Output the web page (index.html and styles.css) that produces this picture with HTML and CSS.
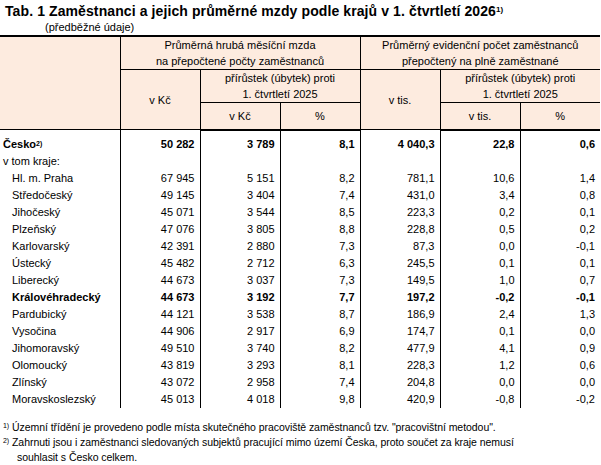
FILE: index.html
```
<!DOCTYPE html>
<html lang="cs">
<head>
    <meta charset="UTF-8">
    <title>Tab. 1 Zaměstnanci a jejich průměrné mzdy podle krajů</title>
    <link rel="stylesheet" href="styles.css">
</head>
<body>
<div class="page">
    <h1>Tab. 1 Zaměstnanci a jejich průměrné mzdy podle krajů v 1. čtvrtletí 2026<sup>1)</sup></h1>
    <p class="sub">(předběžné údaje)</p>

    <table class="tab">
        <colgroup>
            <col class="c-label"><col class="c-num"><col class="c-num"><col class="c-num"><col class="c-num"><col class="c-num"><col class="c-num">
        </colgroup>
        <thead>
        <tr class="h1">
            <th rowspan="3" class="first"></th>
            <th colspan="3">Průměrná hrubá měsíční mzda<br>na přepočtené počty zaměstnanců</th>
            <th colspan="3">Průměrný evidenční počet zaměstnanců<br>přepočtený na plně zaměstnané</th>
        </tr>
        <tr class="h2">
            <th rowspan="2">v Kč</th>
            <th colspan="2">přírůstek (úbytek) proti<br>1. čtvrtletí 2025</th>
            <th rowspan="2">v tis.</th>
            <th colspan="2">přírůstek (úbytek) proti<br>1. čtvrtletí 2025</th>
        </tr>
        <tr class="h3">
            <th>v Kč</th>
            <th>%</th>
            <th>v tis.</th>
            <th>%</th>
        </tr>
        </thead>
        <tbody>
        <tr class="total bold">
            <td>Česko<sup>2)</sup></td><td>50 282</td><td>3 789</td><td>8,1</td><td>4 040,3</td><td>22,8</td><td>0,6</td>
        </tr>
        <tr>
            <td>v tom kraje:</td><td></td><td></td><td></td><td></td><td></td><td></td>
        </tr>
        <tr class="kraj"><td>Hl. m. Praha</td><td>67 945</td><td>5 151</td><td>8,2</td><td>781,1</td><td>10,6</td><td>1,4</td></tr>
        <tr class="kraj"><td>Středočeský</td><td>49 145</td><td>3 404</td><td>7,4</td><td>431,0</td><td>3,4</td><td>0,8</td></tr>
        <tr class="kraj"><td>Jihočeský</td><td>45 071</td><td>3 544</td><td>8,5</td><td>223,3</td><td>0,2</td><td>0,1</td></tr>
        <tr class="kraj"><td>Plzeňský</td><td>47 076</td><td>3 805</td><td>8,8</td><td>228,8</td><td>0,5</td><td>0,2</td></tr>
        <tr class="kraj"><td>Karlovarský</td><td>42 391</td><td>2 880</td><td>7,3</td><td>87,3</td><td>0,0</td><td>-0,1</td></tr>
        <tr class="kraj"><td>Ústecký</td><td>45 482</td><td>2 712</td><td>6,3</td><td>245,5</td><td>0,1</td><td>0,1</td></tr>
        <tr class="kraj"><td>Liberecký</td><td>44 673</td><td>3 037</td><td>7,3</td><td>149,5</td><td>1,0</td><td>0,7</td></tr>
        <tr class="kraj bold"><td>Královéhradecký</td><td>44 673</td><td>3 192</td><td>7,7</td><td>197,2</td><td>-0,2</td><td>-0,1</td></tr>
        <tr class="kraj"><td>Pardubický</td><td>44 121</td><td>3 538</td><td>8,7</td><td>186,9</td><td>2,4</td><td>1,3</td></tr>
        <tr class="kraj"><td>Vysočina</td><td>44 906</td><td>2 917</td><td>6,9</td><td>174,7</td><td>0,1</td><td>0,0</td></tr>
        <tr class="kraj"><td>Jihomoravský</td><td>49 510</td><td>3 740</td><td>8,2</td><td>477,9</td><td>4,1</td><td>0,9</td></tr>
        <tr class="kraj"><td>Olomoucký</td><td>43 819</td><td>3 293</td><td>8,1</td><td>228,3</td><td>1,2</td><td>0,6</td></tr>
        <tr class="kraj"><td>Zlínský</td><td>43 072</td><td>2 958</td><td>7,4</td><td>204,8</td><td>0,0</td><td>0,0</td></tr>
        <tr class="kraj"><td>Moravskoslezský</td><td>45 013</td><td>4 018</td><td>9,8</td><td>420,9</td><td>-0,8</td><td>-0,2</td></tr>
        </tbody>
    </table>

    <div class="notes">
        <p><sup>1)</sup>Územní třídění je provedeno podle místa skutečného pracoviště zaměstnanců tzv. "pracovištní metodou".</p>
        <p><sup>2)</sup>Zahrnuti jsou i zaměstnanci sledovaných subjektů pracující mimo území Česka, proto součet za kraje nemusí</p>
        <p class="cont">souhlasit s Česko celkem.</p>
    </div>
</div>
</body>
</html>
```

FILE: styles.css
```
*{box-sizing:border-box;}
body{margin:0;background:#fff;color:#000;font-family:"Liberation Sans",Arial,sans-serif;}
.page{width:601px;}
h1{margin:0;padding:3px 0 0 5px;font-size:14px;line-height:17px;font-weight:bold;white-space:nowrap;letter-spacing:0.1px;}
h1 sup{font-size:8px;vertical-align:top;position:relative;top:-2px;}
.sub{margin:0;padding-left:45px;font-size:11px;line-height:14px;}
.tab{border-collapse:collapse;table-layout:fixed;width:600px;margin-top:1px;font-size:11px;}
.c-label{width:120px;}
.c-num{width:80px;}
thead th{background:#fdebdf;font-weight:normal;text-align:center;line-height:16px;padding:0;border-left:1px solid #000;border-bottom:1px solid #000;}
thead th.first{border-left:none;}
thead tr.h1 th{border-top:2px solid #000;height:32px;}
thead tr.h2 th{height:32px;}
thead tr.h3 th{height:27px;border-bottom:2px solid #000;}
tbody td{height:17px;padding:0 5px 0 0;text-align:right;border-left:1px solid #000;line-height:13px;white-space:nowrap;}
tbody td:first-child{border-left:none;text-align:left;padding-left:3px;}
tbody tr.kraj td:first-child{padding-left:12px;}
tbody tr.total td{height:23px;padding-top:6px;}
.bold td{font-weight:bold;}
tbody td sup{font-size:7px;vertical-align:top;position:relative;top:-1px;}
.notes{margin-top:12px;font-size:10.5px;letter-spacing:-0.05px;}
.notes p{margin:0;line-height:15px;padding-left:12px;position:relative;}
.notes sup{position:absolute;left:3px;top:-2px;font-size:7px;}
.notes p.cont{padding-left:17px;}
```
